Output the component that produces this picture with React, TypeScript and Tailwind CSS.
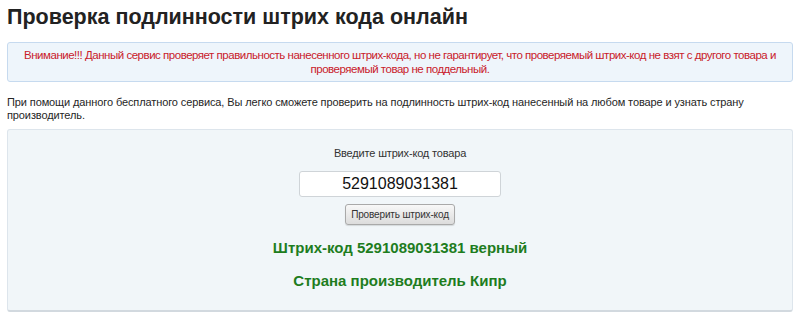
export default function App() {
  return (
    <div className="w-[800px] h-[319px] bg-white px-[7px] pt-[2px] font-['Liberation_Sans',Arial,sans-serif] text-[#333]">
      {/* Title */}
      <h1 className="text-[21.5px] leading-[30px] font-bold text-[#222] whitespace-nowrap">
        Проверка подлинности штрих кода онлайн
      </h1>

      {/* Warning */}
      <div className="mt-[10px] h-[40px] rounded-[3px] border border-[#c6daef] bg-[#eef5fb] flex items-center justify-center text-center text-[11.5px] leading-[14px] tracking-[-0.48px] text-[#c9202a]">
        <p>
          <span className="whitespace-nowrap">
            Внимание!!! Данный сервис проверяет правильность нанесенного штрих-кода, но не гарантирует, что проверяемый штрих-код не взят с другого товара и
          </span>
          <br />
          проверяемый товар не поддельный.
        </p>
      </div>

      {/* Description */}
      <p className="mt-[14px] text-[11px] leading-[13px] tracking-[-0.11px] text-[#262626]">
        <span className="whitespace-nowrap">
          При помощи данного бесплатного сервиса, Вы легко сможете проверить на подлинность штрих-код нанесенный на любом товаре и узнать страну
        </span>
        <br />
        производитель.
      </p>

      {/* Check panel */}
      <div className="mt-[7px] h-[183px] rounded-[3px] border border-[#dde5ec] border-b-2 border-b-[#d2d9df] bg-[#f1f6f9] flex flex-col items-center pt-[15px]">
        <div className="text-[11px] leading-[16px] tracking-[-0.17px] text-[#333]">Введите штрих-код товара</div>
        <input
          readOnly
          value="5291089031381"
          className="mt-[10px] w-[202px] h-[26px] rounded-[3px] border border-[#cfd4d8] bg-white text-center text-[16px] text-[#111] outline-none"
        />
        <button className="mt-[7px] w-[110px] h-[21px] p-0 whitespace-nowrap rounded-[3px] border border-[#a9a9a9] bg-gradient-to-b from-[#f8f8f8] to-[#dcdcdc] text-[10px] tracking-[-0.15px] text-[#333] shadow-[0_1px_1px_rgba(0,0,0,0.12)]">
          Проверить штрих-код
        </button>
        <div className="mt-[14px] text-[15px] leading-[18px] font-bold text-[#1e7d1e]">
          Штрих-код 5291089031381 верный
        </div>
        <div className="mt-[15px] text-[15px] leading-[18px] font-bold text-[#1e7d1e]">
          Страна производитель Кипр
        </div>
      </div>
    </div>
  );
}
